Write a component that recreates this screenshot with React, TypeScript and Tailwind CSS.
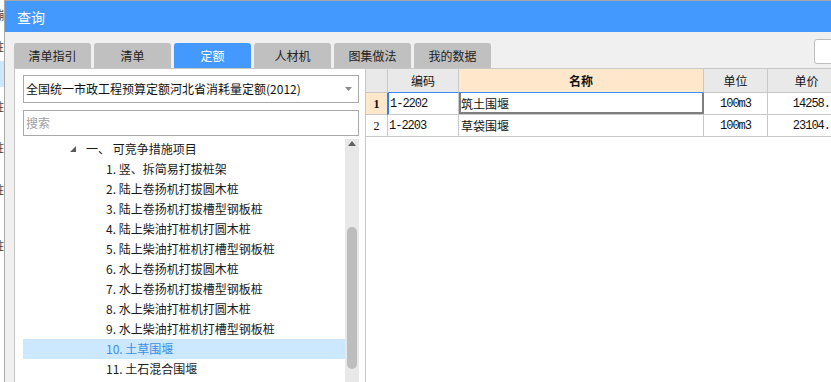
import React from "react";

const items = [
  "1. 竖、拆简易打拔桩架",
  "2. 陆上卷扬机打拔圆木桩",
  "3. 陆上卷扬机打拔槽型钢板桩",
  "4. 陆上柴油打桩机打圆木桩",
  "5. 陆上柴油打桩机打槽型钢板桩",
  "6. 水上卷扬机打拔圆木桩",
  "7. 水上卷扬机打拔槽型钢板桩",
  "8. 水上柴油打桩机打圆木桩",
  "9. 水上柴油打桩机打槽型钢板桩",
  "10. 土草围堰",
  "11. 土石混合围堰",
];

const tabs = ["清单指引", "清单", "定额", "人材机", "图集做法", "我的数据"];

const cjk = { fontFamily: "'Noto Sans CJK SC', 'Noto Sans', sans-serif" };
const mono = { fontFamily: "'Liberation Mono', 'Noto Sans CJK SC', monospace" };

export default function App() {
  return (
    <div className="w-[831px] h-[382px] overflow-hidden flex bg-white" style={cjk}>
      {/* background window strip */}
      <div className="w-[5px] shrink-0 h-full flex flex-col overflow-hidden bg-white border-r border-[#a8a8a8] text-[12px] leading-[14px] text-[#444]">
        <div className="flex justify-end mt-[8px] h-[14px]"><span className="shrink-0">嘣</span></div>
        <div className="flex justify-end mt-[18px] h-[14px]"><span className="shrink-0">桩</span></div>
        <div className="h-[26px] mt-[7px] bg-[#cce8ff]"></div>
        <div className="flex justify-end mt-[13px] h-[14px]"><span className="shrink-0">桩</span></div>
        <div className="flex justify-end mt-[27px] h-[14px]"><span className="shrink-0">桩</span></div>
        <div className="flex justify-end mt-[28px] h-[14px]"><span className="shrink-0">桩</span></div>
        <div className="flex justify-end mt-[42px] h-[14px]"><span className="shrink-0">桩</span></div>
      </div>

      {/* window */}
      <div className="w-[900px] shrink-0 flex flex-col border-t border-[#a8a8a8]">
        <div className="h-[31px] bg-[#4499fe] text-white text-[14px] flex items-center pl-[12px] pt-[2px]">
          查询
        </div>
        <div className="flex-1 bg-[#f0f0f0] pl-[9px] flex flex-col">
          {/* tabs */}
          <div className="mt-[7px] h-[29px] flex items-end gap-[3px]">
            {tabs.map((t) => (
              <div
                key={t}
                className={
                  t === "定额"
                    ? "w-[77px] h-[25px] rounded-t-[3px] bg-[#4499fe] text-white text-[12px] flex items-center justify-center"
                    : "w-[77px] h-[25px] rounded-t-[3px] bg-[#c0c0c0] text-[#222] text-[12px] flex items-center justify-center"
                }
              >
                {t}
              </div>
            ))}
            <div className="self-start ml-[320px] w-[40px] h-[25px] rounded-[3px] border border-[#bdbdbd] bg-white"></div>
          </div>

          {/* content */}
          <div className="flex-1 flex border-t border-[#c8c8c8]">
            {/* left panel */}
            <div className="w-[352px] shrink-0 bg-white border-l border-r border-[#c8c8c8] pl-[8px] pr-[6px] flex flex-col">
              <div className="mt-[6px] h-[28px] border border-[#a9a9a9] flex items-center pl-[2px] pr-[6px] text-[12px] text-[#111]">
                <span className="flex-1">全国统一市政工程预算定额河北省消耗量定额(2012)</span>
                <svg width="7" height="4" viewBox="0 0 7 4">
                  <path d="M0 0 L7 0 L3.5 4 Z" fill="#8a8a8a" />
                </svg>
              </div>
              <div className="mt-[7px] h-[26px] border border-[#a9a9a9] flex items-center pl-[2px] text-[12px] text-[#a0a0a0]">
                搜索
              </div>
              <div className="mt-[3px] flex flex-1">
                <div className="w-[322px] flex flex-col text-[12px] text-[#1a1a1a]">
                  <div className="h-[20px] flex items-center">
                    <svg width="6" height="6" viewBox="0 0 6 6" className="ml-[47px]">
                      <path d="M6 0 L6 6 L0 6 Z" fill="#5a5a5a" />
                    </svg>
                    <span className="ml-[10px]">一、 可竞争措施项目</span>
                  </div>
                  {items.map((it) => (
                    <div
                      key={it}
                      className={
                        it.startsWith("10.")
                          ? "h-[20px] flex items-center pl-[83px] bg-[#cce8ff] text-[#3a8ee6]"
                          : "h-[20px] flex items-center pl-[83px]"
                      }
                    >
                      {it}
                    </div>
                  ))}
                </div>
                <div className="w-[14px] bg-[#e8e8e8] flex flex-col items-center">
                  <svg width="8" height="5" viewBox="0 0 8 5" className="mt-[2px]">
                    <path d="M0 5 L8 5 L4 0 Z" fill="#606060" />
                  </svg>
                  <div className="mt-[81px] w-[10px] h-[142px] rounded-full bg-[#bdbdbd]"></div>
                </div>
              </div>
            </div>

            {/* right table */}
            <div className="flex-1 bg-white flex flex-col text-[12px] text-[#111]">
              <div className="h-[24px] flex bg-[#e9e9e9]">
                <div className="w-[22px] border-r border-b border-[#c8c8c8]"></div>
                <div className="w-[71px] border-r border-[#c8c8c8] border-b-[#3b8bff] border-b flex items-center justify-center">编码</div>
                <div className="w-[245px] border-r border-[#c8c8c8] border-b border-b-[#3b8bff] bg-[#fee7ca] flex items-center justify-center font-bold">名称</div>
                <div className="w-[64px] border-r border-b border-[#c8c8c8] flex items-center justify-center">单位</div>
                <div className="w-[78px] border-r border-b border-[#c8c8c8] flex items-center justify-center">单价</div>
                <div className="flex-1 border-b border-[#c8c8c8]"></div>
              </div>
              {/* row 1 */}
              <div className="h-[22px] flex">
                <div className="w-[21px] bg-[#fee7ca] border-b border-[#c8c8c8] flex items-center justify-center font-bold text-[12px]" style={{ fontFamily: "'Liberation Serif', serif" }}>1</div>
                <div className="w-[72px] border-l-2 border-l-[#2f80f5] border-r border-b border-[#c8c8c8] flex items-center pl-[1px] text-[12px] tracking-[-1px]" style={mono}>1-2202</div>
                <div className="w-[245px] border-b border-[#c8c8c8] flex items-center pl-[2px] shadow-[inset_2px_0_0_#7f7f7f,inset_-2px_-2px_0_#7f7f7f]">筑土围堰</div>
                <div className="w-[64px] border-r border-b border-[#c8c8c8] flex items-center justify-center text-[12px] tracking-[-1px]" style={mono}>100m3</div>
                <div className="w-[78px] border-r border-b border-[#c8c8c8] flex items-center justify-end pr-[15px] text-[12px] tracking-[-1px]" style={mono}>14258.</div>
              </div>
              {/* row 2 */}
              <div className="h-[22px] flex">
                <div className="w-[22px] border-r border-b border-[#c8c8c8] flex items-center justify-center text-[12px]" style={{ fontFamily: "'Liberation Serif', serif" }}>2</div>
                <div className="w-[71px] border-r border-b border-[#c8c8c8] flex items-center pl-[1px] text-[12px] tracking-[-1px]" style={mono}>1-2203</div>
                <div className="w-[245px] border-r border-b border-[#c8c8c8] flex items-center pl-[2px]">草袋围堰</div>
                <div className="w-[64px] border-r border-b border-[#c8c8c8] flex items-center justify-center text-[12px] tracking-[-1px]" style={mono}>100m3</div>
                <div className="w-[78px] border-r border-b border-[#c8c8c8] flex items-center justify-end pr-[15px] text-[12px] tracking-[-1px]" style={mono}>23104.</div>
              </div>
            </div>
          </div>
        </div>
      </div>
    </div>
  );
}
